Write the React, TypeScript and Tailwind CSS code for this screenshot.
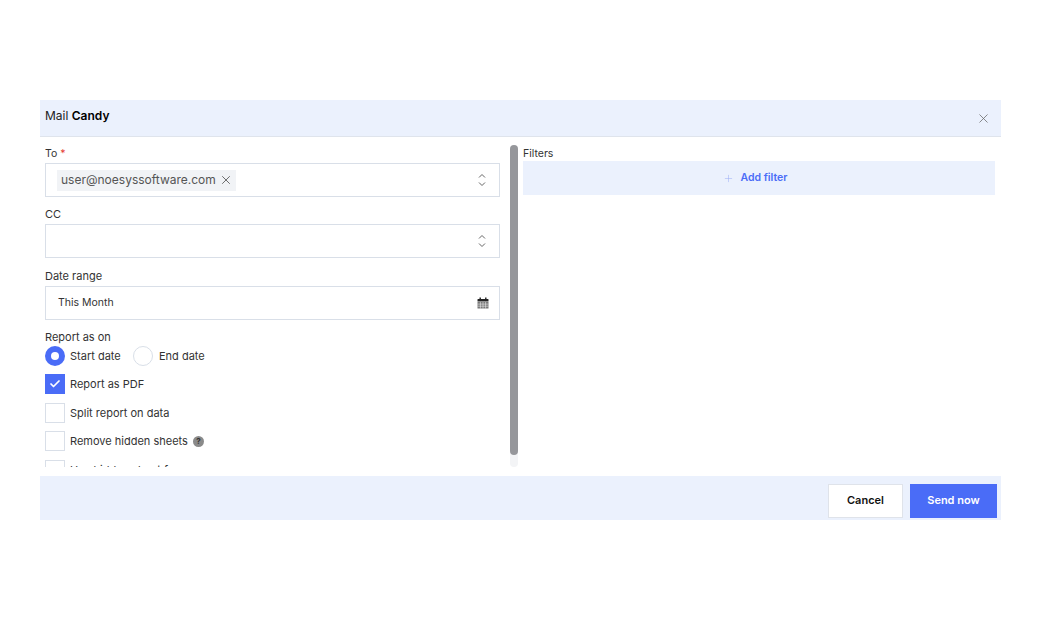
import React from "react";
import { X, Plus, Check } from "lucide-react";

function Calendar() {
  return (
    <svg width="12" height="12" viewBox="0 0 12 12" className="shrink-0">
      <rect x="2.5" y="0.5" width="1.4" height="2.2" fill="#222" />
      <rect x="8.1" y="0.5" width="1.4" height="2.2" fill="#222" />
      <path d="M1 2h10a.5.5 0 0 1 .5.5V4.4H.5V2.5A.5.5 0 0 1 1 2z" fill="#222" />
      <rect x="0.5" y="5" width="11" height="6.5" fill="#777" />
      <path d="M3.4 5v6.5M6 5v6.5M8.6 5v6.5M.5 7.1h11M.5 9.2h11" stroke="#fff" strokeWidth="0.5" />
    </svg>
  );
}

function UpDown() {
  return (
    <svg width="8" height="14" viewBox="0 0 8 14" fill="none" stroke="#666" strokeWidth="1" className="shrink-0">
      <path d="M1 4.5L4 1.5L7 4.5" />
      <path d="M1 9.5L4 12.5L7 9.5" />
    </svg>
  );
}

function SelectBox({ children }: { children?: React.ReactNode }) {
  return (
    <div className="flex h-[34px] items-center justify-between border border-[#d9dfe8] pl-3 pr-[13px]">
      <div className="flex items-center">{children}</div>
      <UpDown />
    </div>
  );
}

function CheckRow({ label, checked, extra, cls }: { label: string; checked?: boolean; extra?: React.ReactNode; cls?: string }) {
  return (
    <div className={`flex h-[20px] items-center ${cls ?? ""}`}>
      <span className={`flex h-[20px] w-[20px] items-center justify-center border ${checked ? "border-[#4a6cf7] bg-[#4a6cf7]" : "border-[#d9dfe8] bg-white"}`}>
        {checked && <Check size={12} strokeWidth={3.5} className="text-white" />}
      </span>
      <span className="ml-[5px] text-[11px] text-[#333]">{label}</span>
      {extra}
    </div>
  );
}

export default function App() {
  return (
    <div className="h-[620px] w-[1041px] overflow-hidden bg-white pt-[100px] pl-[40px] text-[#333]" style={{ fontFamily: "Inter, 'Noto Sans', sans-serif" }}>
      <div className="flex h-[420px] w-[961px] flex-col">
        <div className="flex h-[37px] shrink-0 items-center justify-between border-b border-[#dfe4ec] bg-[#ebf1fd] pl-[5px] pr-[10px]">
          <span className="mb-[4px] text-[12px] text-[#222]">Mail <span className="font-semibold text-black">Candy</span></span>
          <X size={15} strokeWidth={1.2} className="text-[#666]" />
        </div>
        <div className="flex min-h-0 flex-1 pl-[5px] pr-[6px]">
          <div className="relative h-[330px] w-[473px] shrink-0 overflow-hidden pt-[8px]">
            <div className="w-[455px]">
              <div className="flex h-[18px] items-center text-[10.5px]">To&nbsp;<span className="text-[#e53935]">*</span></div>
              <SelectBox>
                <span className="-ml-px flex h-[21px] items-center gap-[3px] bg-[#f1f3f6] pl-[4px] pr-[3px] text-[12px] text-[#555]">
                  <span className="-mt-px">user@noesyssoftware.com</span>
                  <X size={14} strokeWidth={1.3} className="text-[#444]" />
                </span>
              </SelectBox>
              <div className="mt-[8px] flex h-[19px] items-center text-[11px]">CC</div>
              <SelectBox />
              <div className="mt-[9px] flex h-[19px] items-center text-[11px]">Date range</div>
              <div className="flex h-[34px] items-center justify-between border border-[#d9dfe8] pl-3 pr-[10px]">
                <span className="text-[10.5px] text-[#333]">This Month</span>
                <Calendar />
              </div>
              <div className="mt-[9px] flex h-[17px] items-center text-[11px]">Report as on</div>
              <div className="flex h-[20px] items-center">
                <span className="flex h-[20px] w-[20px] items-center justify-center rounded-full bg-[#4a6cf7]">
                  <span className="h-[8px] w-[8px] rounded-full bg-white" />
                </span>
                <span className="ml-[5px] w-[52px] text-[11px]">Start date</span>
                <span className="ml-[11px] h-[20px] w-[20px] rounded-full border border-[#d9dfe8]" />
                <span className="ml-[6px] text-[11px]">End date</span>
              </div>
              <div className="mt-[8px] flex flex-col">
                <CheckRow label="Report as PDF" checked />
                <CheckRow label="Split report on data" cls="mt-[9px]" />
                <CheckRow
                  label="Remove hidden sheets"
                  cls="mt-[8px]"
                  extra={
                    <span className="ml-[5px] flex h-[11px] w-[11px] items-center justify-center rounded-full bg-[#8a8a8a] text-[8px] font-bold leading-none text-[#333]">?</span>
                  }
                />
                <CheckRow label="Use hidden sheet for" cls="mt-[9px]" />
              </div>
            </div>
            <div className="absolute right-0 top-[8px] h-[322px] w-[8px] rounded-full bg-[#f3f4f6]">
              <div className="h-[310px] w-[8px] rounded-full bg-[#96979b]" />
            </div>
          </div>
          <div className="ml-[5px] flex-1 pt-[9px]">
            <div className="flex h-[15px] items-center text-[10.5px]">Filters</div>
            <div className="flex h-[34px] items-center justify-center bg-[#ebf1fd] pr-[7px]">
              <Plus size={11} strokeWidth={1.2} className="text-[#9fb0f5]" />
              <span className="ml-[6px] text-[10.5px] font-semibold text-[#4a6cf7]">Add filter</span>
            </div>
          </div>
        </div>
        <div className="flex h-[44px] shrink-0 items-start justify-end gap-[7px] bg-[#ebf1fd] pr-[4px] pt-[8px]">
          <button className="flex h-[34px] w-[75px] items-center justify-center border border-[#dfe3ea] bg-white pb-px text-[11px] font-semibold text-[#111]">Cancel</button>
          <button className="flex h-[34px] w-[87px] items-center justify-center bg-[#4a6cf7] pb-px text-[11px] font-semibold text-white">Send now</button>
        </div>
      </div>
    </div>
  );
}
